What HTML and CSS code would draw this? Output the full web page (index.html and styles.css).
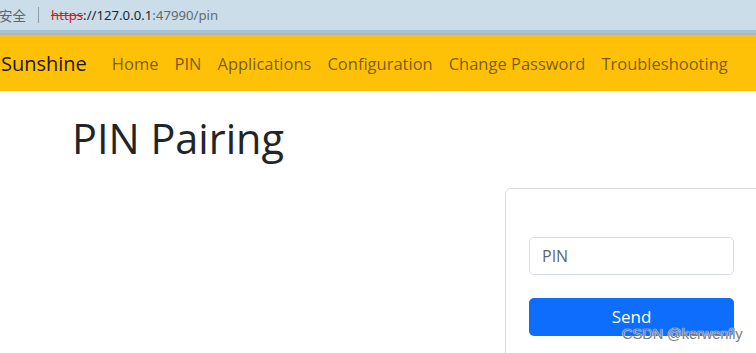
FILE: index.html
```html
<!DOCTYPE html>
<html lang="zh">
<head>
<meta charset="utf-8">
<title>Sunshine - PIN</title>
<link rel="stylesheet" href="styles.css">
</head>
<body>
<div class="chrome">
  <span class="secure">安全</span>
  <span class="sep"></span>
  <span class="url"><span class="https">https</span><span class="host">://127.0.0.1</span><span class="path">:47990/pin</span></span>
</div>
<div class="chrome-edge"></div>
<nav class="navbar">
  <span class="brand">Sunshine</span>
  <a class="nav-link">Home</a>
  <a class="nav-link">PIN</a>
  <a class="nav-link">Applications</a>
  <a class="nav-link">Configuration</a>
  <a class="nav-link">Change Password</a>
  <a class="nav-link">Troubleshooting</a>
</nav>
<main class="container">
  <h1 class="title">PIN Pairing</h1>
  <div class="row">
    <div class="spacer"></div>
    <form class="card">
      <input class="form-control" type="text" placeholder="PIN">
      <button class="btn" type="button">Send</button>
    </form>
  </div>
</main>
<div class="watermark">CSDN @kerwenfly</div>
</body>
</html>
```
FILE: styles.css
```css
html, body {
  margin: 0;
  padding: 0;
  overflow: hidden;
  background: #fff;
  font-family: "Open Sans", "Noto Sans", sans-serif;
}
.chrome {
  height: 30px;
  background: #cadde9;
  display: flex;
  align-items: center;
  font-family: "Noto Sans", "Noto Sans CJK SC", sans-serif;
  font-size: 13.2px;
  color: #555;
}
.secure {
  font-family: "Noto Sans CJK SC", sans-serif;
  font-size: 13.5px;
  margin-left: -1px;
  color: #5c6670;
}
.sep {
  width: 1px;
  height: 16px;
  background: #8a9aa6;
  margin: 0 12px 0 12px;
}
.url { letter-spacing: 0; }
.https {
  color: #d02020;
  text-decoration: line-through;
}
.host { color: #1e2a33; }
.path { color: #5f6b75; }
.chrome-edge {
  height: 5px;
  background: linear-gradient(#a9c3d6 0 3px, #b4b4b0 3px 5px);
}
.navbar {
  height: 56px;
  background: #ffc107;
  display: flex;
  align-items: center;
  box-sizing: border-box;
}
.brand {
  font-size: 20px;
  color: rgba(0, 0, 0, 0.9);
  margin-left: 1px;
  margin-right: 17px;
}
.nav-link {
  font-size: 16.5px;
  color: rgba(0, 0, 0, 0.55);
  padding: 0 8px;
}
.container {
  padding-left: 72px;
}
.title {
  margin: 23px 0 0 0;
  font-weight: 400;
  font-size: 41.4px;
  line-height: 49px;
  color: #212529;
}
.row {
  display: flex;
  margin-top: 25px;
}
.spacer {
  width: 433px;
  flex: none;
}
.card {
  flex: none;
  width: 260px;
  height: 180px;
  box-sizing: border-box;
  border: 1px solid rgba(0, 0, 0, 0.14);
  border-radius: 6px;
  padding: 48px 0 0 23px;
  margin: 0;
}
.form-control {
  display: block;
  box-sizing: border-box;
  width: 205px;
  height: 38px;
  border: 1px solid #d8dde2;
  border-radius: 5px;
  padding: 0 12px;
  font-family: "Open Sans", sans-serif;
  font-size: 16px;
  color: #212529;
  background: #fff;
  outline: none;
}
.form-control::placeholder { color: #5d6773; }
.btn {
  display: block;
  box-sizing: border-box;
  width: 205px;
  height: 38px;
  margin-top: 23px;
  border: none;
  border-radius: 5px;
  background: #0d6efd;
  color: #fff;
  font-family: "Open Sans", sans-serif;
  font-size: 17px;
  padding: 0 0 2px 0;
}
.watermark {
  position: absolute;
  left: 622px;
  top: 326px;
  font-family: "Liberation Sans", Arial, sans-serif;
  font-size: 14.8px;
  color: #7d7d7d;
  text-shadow: 0 0 1px #fff, 0 0 1px #fff;
  letter-spacing: -0.2px;
}
```
